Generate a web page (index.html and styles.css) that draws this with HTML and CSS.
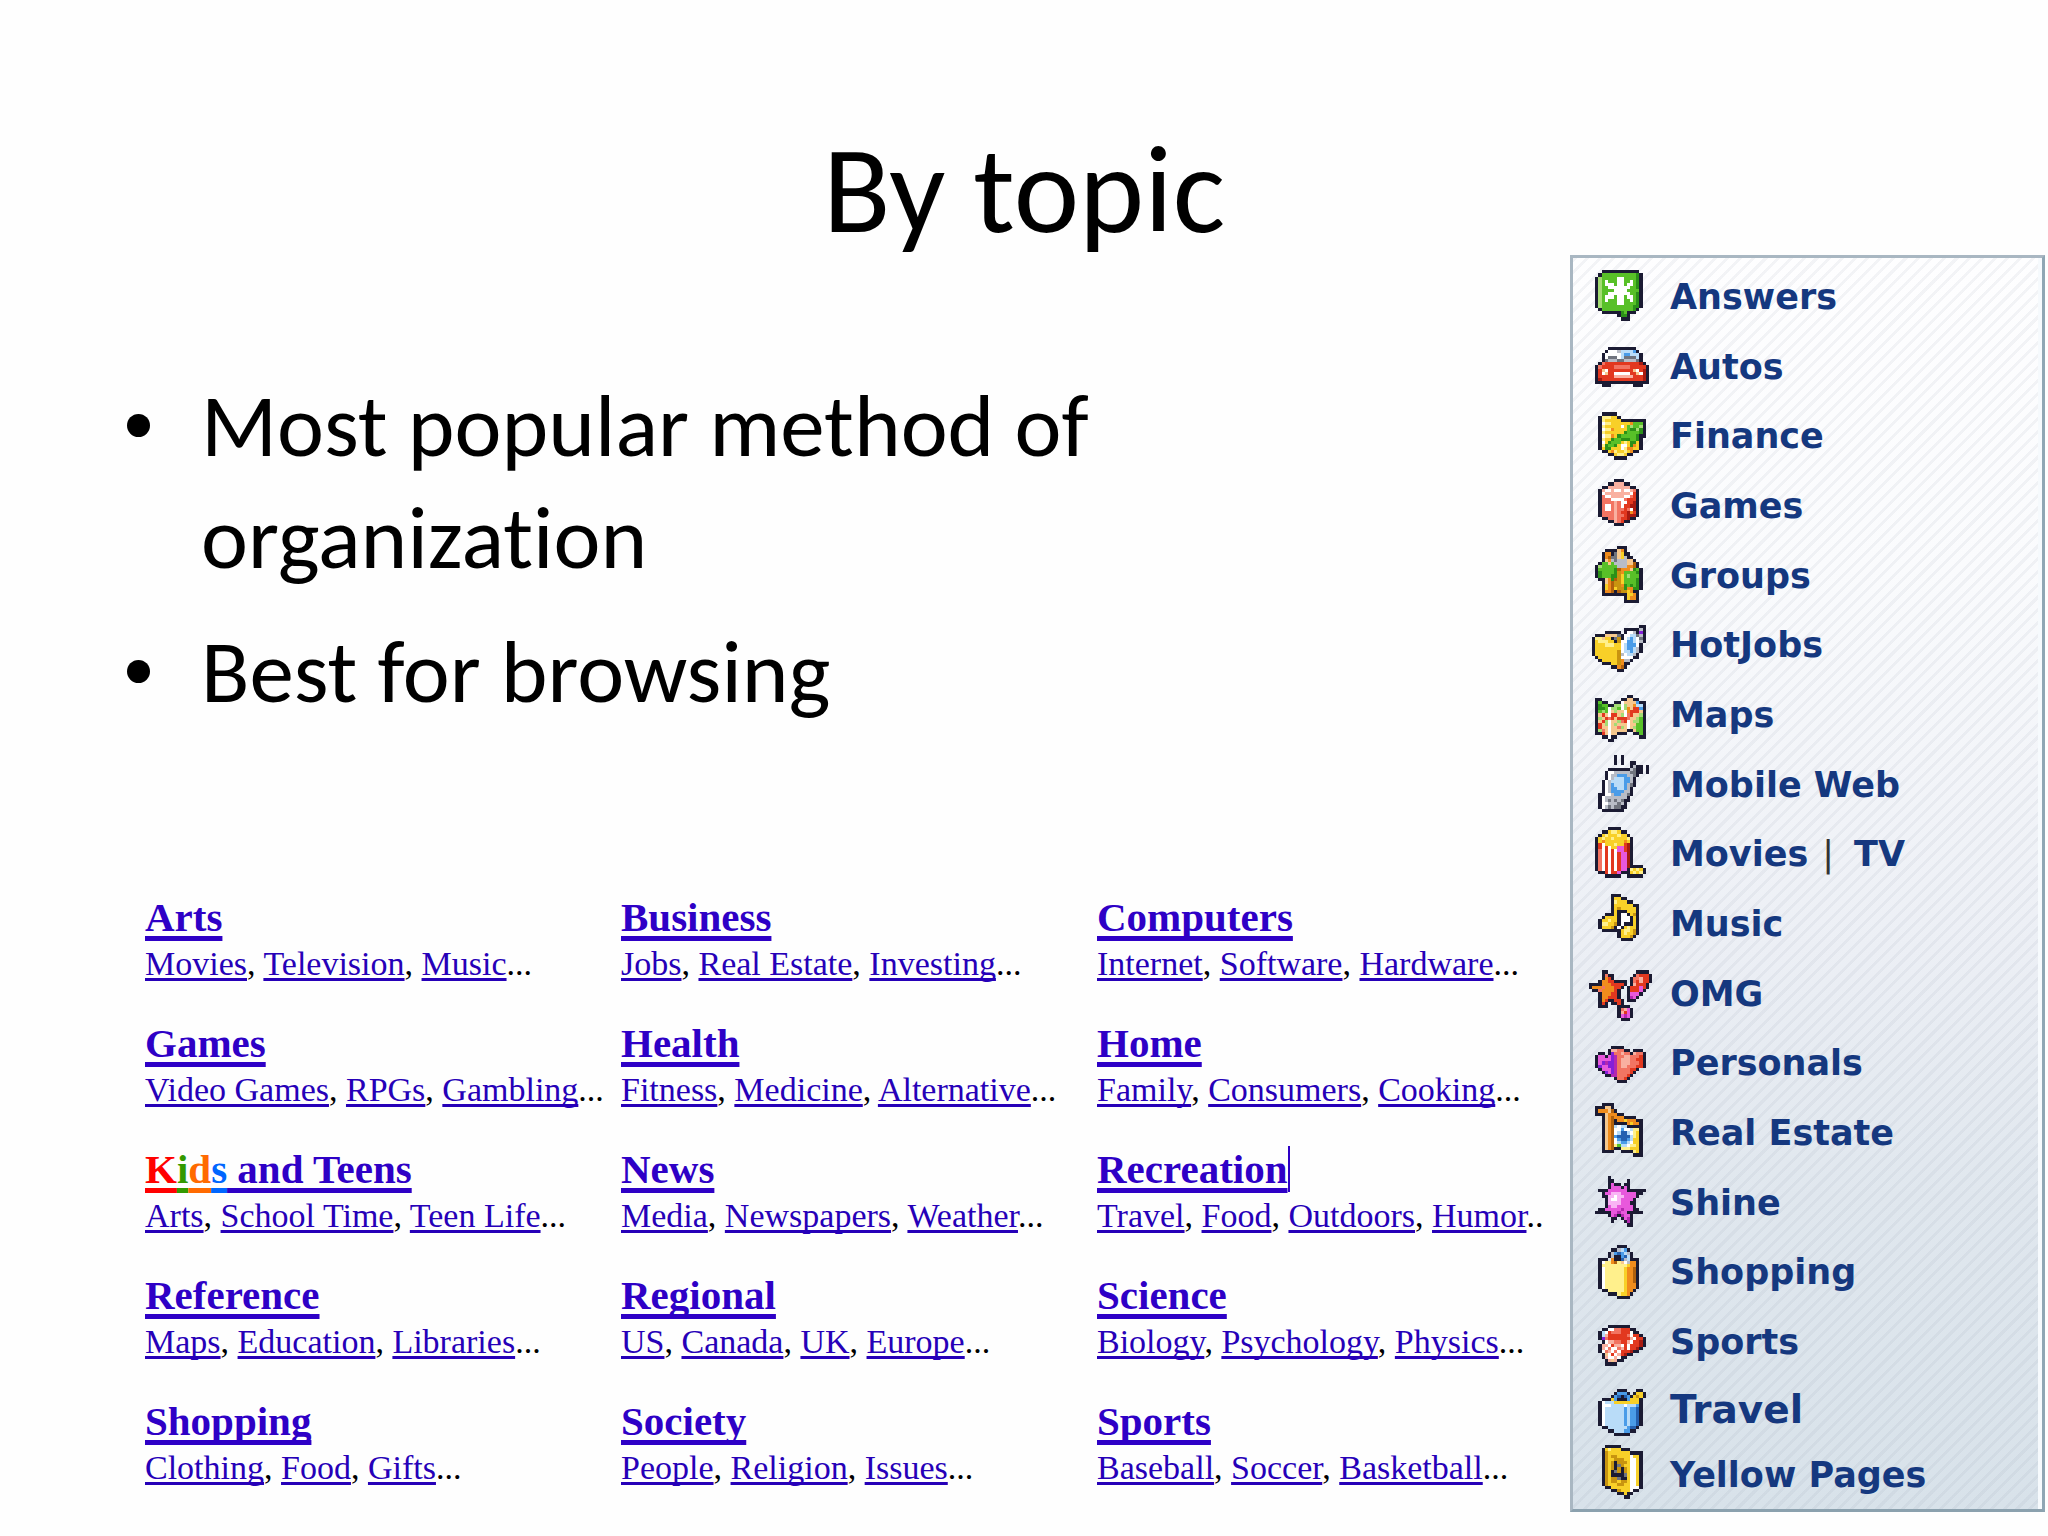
FILE: index.html
```html
<!DOCTYPE html>
<html lang="en">
<head>
<meta charset="utf-8">
<title>By topic</title>
<link rel="stylesheet" href="styles.css">
</head>
<body>
<div class="slide">
  <h1 class="title">By topic</h1>
  <div class="content">
    <main class="main">
      <ul class="points">
        <li>Most popular method of organization</li>
        <li>Best for browsing</li>
      </ul>
      <div class="directory">
        <section class="topic"><h2><a href="#">Arts</a></h2><p><a href="#">Movies</a>, <a href="#">Television</a>, <a href="#">Music</a>...</p></section>
        <section class="topic"><h2><a href="#">Business</a></h2><p><a href="#">Jobs</a>, <a href="#">Real Estate</a>, <a href="#">Investing</a>...</p></section>
        <section class="topic"><h2><a href="#">Computers</a></h2><p><a href="#">Internet</a>, <a href="#">Software</a>, <a href="#">Hardware</a>...</p></section>
        <section class="topic"><h2><a href="#">Games</a></h2><p><a href="#">Video Games</a>, <a href="#">RPGs</a>, <a href="#">Gambling</a>...</p></section>
        <section class="topic"><h2><a href="#">Health</a></h2><p><a href="#">Fitness</a>, <a href="#">Medicine</a>, <a href="#">Alternative</a>...</p></section>
        <section class="topic"><h2><a href="#">Home</a></h2><p><a href="#">Family</a>, <a href="#">Consumers</a>, <a href="#">Cooking</a>...</p></section>
        <section class="topic"><h2><a class="kids" href="#"><span class="red">K</span><span class="green">i</span><span class="orange">d</span><span class="blue">s</span><span> and Teens</span></a></h2><p><a href="#">Arts</a>, <a href="#">School Time</a>, <a href="#">Teen Life</a>...</p></section>
        <section class="topic"><h2><a href="#">News</a></h2><p><a href="#">Media</a>, <a href="#">Newspapers</a>, <a href="#">Weather</a>...</p></section>
        <section class="topic"><h2><a class="caret" href="#">Recreation</a></h2><p><a href="#">Travel</a>, <a href="#">Food</a>, <a href="#">Outdoors</a>, <a href="#">Humor</a>..</p></section>
        <section class="topic"><h2><a href="#">Reference</a></h2><p><a href="#">Maps</a>, <a href="#">Education</a>, <a href="#">Libraries</a>...</p></section>
        <section class="topic"><h2><a href="#">Regional</a></h2><p><a href="#">US</a>, <a href="#">Canada</a>, <a href="#">UK</a>, <a href="#">Europe</a>...</p></section>
        <section class="topic"><h2><a href="#">Science</a></h2><p><a href="#">Biology</a>, <a href="#">Psychology</a>, <a href="#">Physics</a>...</p></section>
        <section class="topic"><h2><a href="#">Shopping</a></h2><p><a href="#">Clothing</a>, <a href="#">Food</a>, <a href="#">Gifts</a>...</p></section>
        <section class="topic"><h2><a href="#">Society</a></h2><p><a href="#">People</a>, <a href="#">Religion</a>, <a href="#">Issues</a>...</p></section>
        <section class="topic"><h2><a href="#">Sports</a></h2><p><a href="#">Baseball</a>, <a href="#">Soccer</a>, <a href="#">Basketball</a>...</p></section>
      </div>
    </main>
    <nav class="panel" aria-label="Services">
      <ul class="services">
        <li><span class="icon" data-icon="answers"></span><a href="#">Answers</a></li>
        <li><span class="icon" data-icon="autos"></span><a href="#">Autos</a></li>
        <li><span class="icon" data-icon="finance"></span><a href="#">Finance</a></li>
        <li><span class="icon" data-icon="games"></span><a href="#">Games</a></li>
        <li><span class="icon" data-icon="groups"></span><a href="#">Groups</a></li>
        <li><span class="icon" data-icon="hotjobs"></span><a href="#">HotJobs</a></li>
        <li><span class="icon" data-icon="maps"></span><a href="#">Maps</a></li>
        <li><span class="icon" data-icon="mobile"></span><a href="#">Mobile Web</a></li>
        <li><span class="icon" data-icon="movies"></span><a href="#">Movies</a><span class="bar">|</span><a href="#">TV</a></li>
        <li><span class="icon" data-icon="music"></span><a href="#">Music</a></li>
        <li><span class="icon" data-icon="omg"></span><a href="#">OMG</a></li>
        <li><span class="icon" data-icon="personals"></span><a href="#">Personals</a></li>
        <li><span class="icon" data-icon="realestate"></span><a href="#">Real Estate</a></li>
        <li><span class="icon" data-icon="shine"></span><a href="#">Shine</a></li>
        <li><span class="icon" data-icon="shopping"></span><a href="#">Shopping</a></li>
        <li><span class="icon" data-icon="sports"></span><a href="#">Sports</a></li>
        <li><span class="icon" data-icon="travel"></span><a class="large" href="#">Travel</a></li>
        <li><span class="icon" data-icon="yellow"></span><a href="#">Yellow Pages</a></li>
      </ul>
    </nav>
  </div>
</div>
<script src="icons.js"></script>
</body>
</html>
```
FILE: styles.css
```css
* { box-sizing: border-box; }
body { margin: 0; background: #fefefe; color: #000; }
ul { margin: 0; padding: 0; list-style: none; }
a { color: inherit; }

.slide {
  min-height: 100vh;
  display: flex;
  flex-direction: column;
  font-family: Carlito, Lato, sans-serif;
  font-variant-ligatures: none;
}
.title {
  margin: 0;
  padding: 125px 0 0;
  text-align: center;
  font-size: 124px;
  line-height: 130px;
  font-weight: 400;
}
.content {
  flex: 1;
  display: grid;
  grid-template-columns: 1fr 475px;
  padding: 0 3px 24px 0;
}
.main { padding-top: 115px; }

.points {
  max-width: 1200px;
  padding-left: 201px;
  font-size: 89px;
  line-height: 112px;
}
.points li { position: relative; margin-bottom: 22px; }
.points li::before {
  content: "";
  position: absolute;
  left: -74px;
  top: 44px;
  width: 23px;
  height: 23px;
  border-radius: 50%;
  background: #000;
}

.directory {
  display: grid;
  grid-template-columns: repeat(3, 1fr);
  gap: 32px 3px;
  padding: 142px 0 0 145px;
  font-family: "Liberation Serif", serif;
  white-space: nowrap;
}
.topic h2, .topic p { margin: 0; }
.topic h2 {
  color: #2e00c6;
  font-size: 41px;
  line-height: 50px;
}
.topic p {
  font-size: 34px;
  line-height: 44px;
}
.topic a { text-decoration-skip-ink: none; }
.topic h2 a {
  text-decoration-thickness: 5px;
  text-underline-offset: 5px;
}
.topic p a {
  color: #2600b8;
  text-decoration-thickness: 3px;
  text-underline-offset: 3px;
}
.topic h2 .kids { text-decoration: none; }
.kids span {
  text-decoration: underline 5px;
  text-underline-offset: 5px;
}
.kids .red { color: #ff0000; }
.kids .green { color: #339900; }
.kids .orange { color: #ff6a00; }
.kids .blue { color: #0066ff; }
.caret { border-right: 2px solid #2e00c6; }

.panel {
  display: flex;
  border: 3px solid #a9b7c2;
  border-right-color: #8fa6b4;
  border-bottom-color: #8ba1ae;
  box-shadow: inset -4px 0 0 #f6fafd;
  background:
    repeating-linear-gradient(135deg, rgba(130, 140, 160, 0.09) 0 3px, transparent 3px 9px),
    linear-gradient(#fefeff 0%, #fafbfd 25%, #eceff5 55%, #e0e7ee 75%, #d8e2ea 100%);
}
.services {
  flex: 1;
  display: grid;
  grid-template-rows: repeat(16, 1fr) 64px 68px;
  padding: 4px 0 0 16px;
  font: 700 35px "DejaVu Sans", sans-serif;
  color: #15387f;
}
.services li { display: flex; align-items: center; }
.services a { text-decoration: none; }
.services .large { font-size: 39px; }
.icon { width: 63px; height: 60px; margin-right: 18px; }
.icon svg { display: block; width: 100%; height: 100%; }
.bar { margin: 0 20px 0 14px; color: #333; font-weight: 400; }
```
FILE: icons.js
```js
// Pixel icons: each letter is one cell of a 20 x 19 grid; x and y give the top-left cell.
const palette = {
  K: "#1b1b33", W: "#ffffff",
  l: "#a4dc74", g: "#58c028", G: "#2b9018",
  p: "#f9b0a0", o: "#f27462", r: "#e2381f", R: "#a81a10",
  c: "#b9dcf8", b: "#4a9ce8", B: "#2460b0",
  z: "#fff08c", y: "#f8d028", Y: "#c89410",
  s: "#f6c88e", n: "#f08c1c", N: "#b0600c",
  a: "#b8bcc6", A: "#70747e",
  h: "#f9b4f4", m: "#e858dc", M: "#b428b0", v: "#8420d8"
};

const icons = {
  answers: { x: 2, y: 1, rows: `
..KKKKKKKKKKKK.
.KgggggggggggGK
KlgggggWWggggGK
KlgWgggWWggWgGK
KlgWWWgWWgWWgGK
KlggWWWWWWWggGK
KlggggWWWWggggK
KlggWWWWWWWggGK
KlgWWWgWWgWWgGK
KlgWgggWWggWgGK
KlgggggWWggggGK
KlggggggggggGGK
.KggggggggggGK.
..KKKKKKGgKKK..
.......KGGK....
........KKK....` },
  autos: { x: 2, y: 3, rows: `
....KKKKKKKKK....
...KWWWaccccbK...
..KWWWWWcbbcccK..
..KWAAAWcAAAAcK..
..KAaaaAAaaaaAK..
.KorrrrrrrrrrrRK.
KorrrrooooorrrrrK
KrsWrrrrrrrrsWrRK
KrWsrrWWWWWrrsWRK
KrrrrrpppppprrrRK
KRrrrrrrrrrrrrrRK
KKKKKKKKKKKKKKKKK
..KKK.......KKK..` },
  finance: { x: 3, y: 2, rows: `
.KKKKK.........
KzzzyyK........
KzyyyyyKKKKKKKK
KWzzyyyyyyngggK
KzyyyyyWyglgglK
KWzznyyyygGGlGK
KzyyyyyyGggggGK
KWzznyGgggggGKK
KzyyGggGGGggGK.
KWyGgggyzyGGyK.
KzGggGyWWyGnyK.
KyGGyyyWznnyyK.
.KKynzyyzynKK..
...KKyzzyKK....
.....KKKK......` },
  games: { x: 3, y: 1, rows: `
.....KKK.....
...KKpppKK...
.KKpppppppKK.
KpWWpWWpWWpoK
KWppppppppWrK
KoWWppppWWorK
KoooWWWWorrrK
KoooopoWWrrRK
KoWWopoWrrRRK
KoWWopooroWRK
KooooporrRnrK
KoooopoorRRRK
.KKooporrRKK.
...KKporKK...
.....KKK.....` },
  groups: { x: 2, y: 0, rows: `
.......KKK.....
...KKKKsnK.....
..KnnKAsyKK....
..KnNAAsyaKK...
..KsnaAaaassK..
.KggsgaaaassNK.
KlgggggaaannNK.
KgggggGNnnnsGgK
KGggggGYnggggGK
KGgggGGYyglgggK
.KKsnGNYyggggGK
..KsnNYYyggggGK
..KynNYYnGgGgGK
..KynNyYYGnnGGK
..KnnNKNYYynKK.
..KKKKKKKKyynK.
.........KynnK.
.........KKKKK.` },
  hotjobs: { x: 1, y: 3, rows: `
...............KK
..........KKKKKaK
....KKKKK.KWWaKvK
.KKKssssAKWWccAaK
KzzsyyKAYKWcbcWAK
KyzzzyyKYWWbbcWaK
KyyyzzzyyWcbbbWK.
KyyyyyyyyWcbbcaK.
KyyyyyyyYWccbcaK.
KyyyyyyyYaWccaK..
.KyyyyyyYWWWWKK..
..KyyyyyYnaaK....
...KKKyyYnKK.....
......KKnNK......
........KK.......` },
  maps: { x: 2, y: 3, rows: `
..........KK....
KK......KKssKK..
KgKK..KKWssssbKK
KGggKKllWlssnccK
KGGgWllgWlnsrrbK
KglgWslssWnrrrsK
KsrsWrrslWorsslK
KlsrorsrrrosslgK
KsrlWsslorWsllgK
KrslWslsssWssggK
KrssWssolsWslggK
KlosWsssssKKsggK
KKrsWssKKK..KKgK
..KKWKK.......KK
....KK..........` },
  mobile: { x: 3, y: 0, rows: `
.....K.K........
.....K.K........
.....K.K..KK....
..........KaKK.K
...KKKKKKKaAKK.K
..KWWaaaaaAAKK.K
..KWaabbbaaAK...
..KWacccbbaK....
.KWaccccbbaK....
.KWabcccbaAK....
.KWabbccbaK.....
.KWabbbbaaK.....
KKWWabbaaAK.....
KWaaaaaaaK......
KWaAaAaAKK......
KWWaaaAaK.......
KWaAaAAKK.......
.KKKKKKK........` },
  movies: { x: 2, y: 1, rows: `
....KKKK........
..KKyzzyKK......
.KyzyyyzyyK.....
KyzyyzyyyyzK....
KynyyyyyynyK....
KrWyyyzyyrRK....
KrWrWyymmrRK....
KoWrWrWmmrRK....
KoWrWrWrmmRK....
KoWrWrWrmmRK....
KoWrWrWrmmRK....
KoWrWrWrmmRK....
KoWrWrWrmmRKKKK.
KoWrWrWrmmKzyzyK
.KKrWrrmKKKyzyzK
...KKKKK..KKKKK.` },
  music: { x: 3, y: 0, rows: `
....KKK......
....KyyKK....
....KzyyyKK..
....KyyyyyyKK
....KyYyyyyyK
....KyKKKyyyK
..KKKyKWWKyYK
.KyyyyKWWWKyK
KyyzyyKWWWKyK
KzzyyYKWKKKyK
KyyyYKWKyzyyK
.KKKKKKyzzyYK
......KyzyyYK
......KyyyYK.
.......KKKK..` },
  omg: { x: 0, y: 2, rows: `
....KK.........KKKK.
....KoKK......KorrrK
....KnrK.....KooprrK
...KnnrrKKKK.KorprrK
KKKKnnnrrrrK.KprrrK.
KnnnonnnrrK.KrrrmrK.
.KKonnnnrK..KrrrmK..
...KnnnrrK..KmmmK...
...KnnrrrK..KMmK....
...KnrKKrrK.KKK.....
...KrK.KKrK.........
...KKK...KKKK.......
.........KopmK......
.........KprmK......
.........KmMmK......
..........KKK.......` },
  personals: { x: 2, y: 4, rows: `
.....KKKK.......
....KppooKK.KKK.
.KK.KvoopooKpooK
KmmKmvMooppooorK
KmmmmvMopppoorrK
KmvMvvMopppooorK
KvmmvvMoppooorrK
.KmmmvMoooorrK..
..KvmvMoooorK...
...KKMMooorK....
......KoorK.....
.......KKK......` },
  realestate: { x: 2, y: 0, rows: `
..KKKK.........
KKKssK.........
KnnnsNK........
KKKsnnnKK......
..KsnNnnnKKKK..
..KsnNKnnynnnKK
..KsnNKKKKnynnK
..KsnNcWccKKKKK
..KsnNWWbWWczzK
..KsnNWcBBcWzyK
..KsnNbBBBBczyK
..KsnNWbBBbcyyK
..KsnNWcbbcWyyK
..KsnNzgccWzzyK
..KsnNKKzzzyyyK
..KKKK..KKKKzyK
............KKK` },
  shine: { x: 2, y: 1, rows: `
....K...........
....KK....K.....
....KmKK.KK.....
....KmmmKmK.....
.KKKmmmmmmKKKKKK
..KmmhhhmmmmmKK.
..KKhhWhhmmmmK..
...KhWWhmmmmK...
...KhhhhmmmKK...
...KmhhmmmmmK...
.KKmmmmmMmmmKK..
KKKKKmmMmmKKKKK.
....KmMKMmmK....
.....KK.KmMK....
.....K...KMK....
..........KK....` },
  shopping: { x: 3, y: 1, rows: `
......KKK....
....KKacbK...
...KabBbcaK..
...KaKKbBcK..
KKK.nKKBacKKK
KWzznNzsWannK
KzzzzzzzzynnK
KWzzzzzzynnNK
KWzzzzzzynnNK
KWzzzzzzynnNK
KWzzzzzzynnNK
KWzzzzzzynnNK
KWzzzzzzynnnK
KWzzzzzzynnnK
.KKzzzzzynnK.
...KKKzyynK..
......KKKK...` },
  sports: { x: 3, y: 4, rows: `
...KKKKKKK.....
.KKWWoorrrKK...
KcWrooorrrWKK..
KcprrrrrroWrrK.
KvorrrrrrrpWrrK
.KWppoorrpWrrRK
KppWrppWrWrrrRK
KpWoWWoprWrrRK.
KWopWoWrrrRKK..
.KsWrWprRKK....
.KpWWpWKK......
..KpspKK.......
..KKKK.........` },
  travel: { x: 3, y: 3, rows: `
......KKK...KK.
.....KbbbK.KyyK
....KbBKBbKyYyK
.KKKybKKKbyyyK.
KWcccyyyyyyyyK.
KWWWccccWcccbK.
KWccccccbcbbBK.
KWccccccbcbbBK.
KWccccccbcbbBK.
KWccccccbcbbBK.
KWccccccbcbbBK.
KWccccccbcbbBK.
.KKccccccbBBK..
...KKcccbbKK...
.....KKKKK.....` },
  yellow: { x: 4, y: 0, rows: `
.KKKKK.......
KyzyyyKKK....
KYyyyyyyyKKKK
KYyYYyyyyWyyK
KYyyYYYyyWWyK
KYyYKYYYyWWyK
KYyYKAYyyWWyK
KYyYKYKYyWWyK
KYyKAYKYyWWyK
KYyKKKKAyWWyK
KYyYYAKKyWWyK
KYyYYyYYyWWyK
KYyyyYYyyWWyK
.KKyyyyyyWWWK
...KKYyyyWKK.
.....KKyKK...
.......KK....` }
};

// Join equal neighbours on a row into one run, one path per colour.
function drawIcon({ x, y, rows }) {
  const paths = {};
  rows.trim().split("\n").forEach((row, r) => {
    for (const run of row.matchAll(/([A-Za-z])\1*/g)) {
      const w = run[0].length;
      paths[run[1]] = (paths[run[1]] || "") + `M${x + run.index} ${y + r}h${w}v1h-${w}z`;
    }
  });
  const body = Object.entries(paths)
    .map(([key, d]) => `<path fill="${palette[key]}" d="${d}"/>`).join("");
  return `<svg viewBox="0 0 20 19" shape-rendering="crispEdges" aria-hidden="true">${body}</svg>`;
}

document.querySelectorAll("[data-icon]").forEach(el => {
  el.innerHTML = drawIcon(icons[el.dataset.icon]);
});
```
